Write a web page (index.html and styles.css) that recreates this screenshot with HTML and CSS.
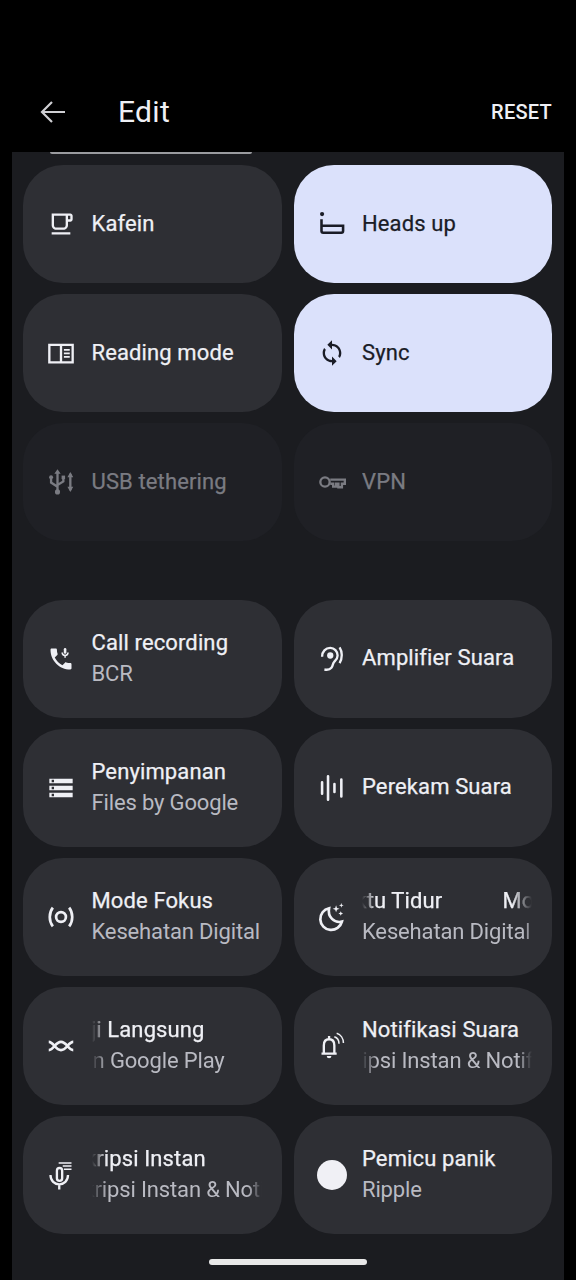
FILE: index.html
```html
<!DOCTYPE html>
<html lang="id">
<head>
    <meta charset="UTF-8">
    <title>Edit</title>
    <link rel="stylesheet" href="styles.css">
</head>
<body>

<header class="topbar">
    <svg class="back" viewBox="0 0 26 24"><path d="M25 12H2M12 2 2 12l10 10"/></svg>
    <h1>Edit</h1>
    <span class="reset">RESET</span>
</header>

<main class="panel">
    <div class="tile-edge"></div>

    <div class="grid">
        <div class="tile">
            <svg class="icon" viewBox="0 0 24 24"><path class="solid" d="M4 19h16v2H4zM20 3H4v10c0 2.21 1.79 4 4 4h6c2.21 0 4-1.79 4-4v-3h2c1.11 0 2-.9 2-2V5c0-1.11-.89-2-2-2zm-4 10c0 1.1-.9 2-2 2H8c-1.1 0-2-.9-2-2V5h10v8zm4-5h-2V5h2v3z"/></svg>
            <div class="text"><div class="title">Kafein</div></div>
        </div>
        <div class="tile on">
            <svg class="icon" viewBox="0 0 24 24"><circle class="solid" cx="3.500" cy="3.500" r="1.800"/><path class="round" d="M3 8v10c0 1 .5 1.500 1.500 1.500h15.500c1 0 1.500-.5 1.500-1.500v-4.500H3"/></svg>
            <div class="text"><div class="title">Heads up</div></div>
        </div>
        <div class="tile">
            <svg class="icon" viewBox="0 0 24 24"><path class="solid" d="M1 4h22v17H1zm2 2v13h8V6zm10 0v13h8V6zm1.500 2.500h5V10h-5zm0 3h5V13h-5zm0 3h5V16h-5z" fill-rule="evenodd"/></svg>
            <div class="text"><div class="title">Reading mode</div></div>
        </div>
        <div class="tile on">
            <svg class="icon" viewBox="0 0 24 24"><path class="solid" d="M12 4V1L8 5l4 4V6c3.310 0 6 2.690 6 6 0 1.010-.25 1.970-.7 2.800l1.460 1.460C19.540 15.030 20 13.570 20 12c0-4.420-3.580-8-8-8zm0 14c-3.310 0-6-2.690-6-6 0-1.010.25-1.970.7-2.800L5.240 7.740C4.460 8.970 4 10.430 4 12c0 4.420 3.580 8 8 8v3l4-4-4-4v3z"/></svg>
            <div class="text"><div class="title">Sync</div></div>
        </div>
        <div class="tile off">
            <svg class="icon" viewBox="0 0 24 24"><path d="M9 4v17M3.500 9v3.500l5.500 3.500M14 8v3.500L9 14.500M20 5v14"/><path class="solid" d="M9 1l-2.700 4h5.400zM20 3.500 17.500 8h5zM20 20.500 17.500 16h5z"/><circle class="solid" cx="3.500" cy="8" r="1.700"/><circle class="solid" cx="9" cy="20.500" r="2.200"/><path class="solid" d="M12.500 6.500h3v3h-3z"/></svg>
            <div class="text"><div class="title">USB tethering</div></div>
        </div>
        <div class="tile off">
            <svg class="icon" viewBox="0 0 24 24"><circle cx="6" cy="12" r="4"/><path d="M10.500 10h12.500v3.500h-2.500v3h-3v-3h-2v2.500h-2.500v-2.500h-2.500"/></svg>
            <div class="text"><div class="title">VPN</div></div>
        </div>
    </div>

    <div class="grid second">
        <div class="tile">
            <svg class="icon" viewBox="0 0 24 24"><path class="solid" d="M6.620 10.790c1.440 2.830 3.760 5.140 6.590 6.590l2.200-2.200c.27-.27.67-.36 1.020-.24 1.120.37 2.330.57 3.570.57.55 0 1 .45 1 1V20c0 .55-.45 1-1 1C10.610 21 3 13.390 3 4c0-.55.45-1 1-1h3.500c.55 0 1 .45 1 1 0 1.250.2 2.450.57 3.570.11.35.03.74-.25 1.020l-2.200 2.200z"/><path class="thin" d="M13 6.500a2.500 2.500 0 0 0 5 0M15.500 9v2"/><rect class="solid" x="14.400" y="2.500" width="2.200" height="5" rx="1.100"/></svg>
            <div class="text"><div class="title">Call recording</div><div class="sub">BCR</div></div>
        </div>
        <div class="tile">
            <svg class="icon" viewBox="0 0 24 24"><path d="M3.500 10C3.500 5.500 6.500 2.500 10.500 2.500c3.500 0 6.300 2.800 6.300 6.500 0 3-1.800 4.200-3 5.500-1.300 1.400-1 3.500-2.300 5-1.200 1.500-3.400 2-6 1.500"/><circle class="solid" cx="10.500" cy="9" r="2.700"/><path d="M18.500 2c2.500 3.800 2.500 9.500 0 13.500"/></svg>
            <div class="text"><div class="title">Amplifier Suara</div></div>
        </div>
        <div class="tile">
            <svg class="icon" viewBox="0 0 24 24"><path class="solid" d="M2 20h20v-4H2v4zm2-3h2v2H4v-2zM2 4v4h20V4H2zm4 3H4V5h2v2zm-4 7h20v-4H2v4zm2-3h2v2H4v-2z"/></svg>
            <div class="text"><div class="title">Penyimpanan</div><div class="sub">Files by Google</div></div>
        </div>
        <div class="tile">
            <svg class="icon" viewBox="0 0 24 24"><path class="bars" d="M3.500 7v10M8.600 2v20M14.100 8.500v7M20 4.800v14.400"/></svg>
            <div class="text"><div class="title">Perekam Suara</div></div>
        </div>
        <div class="tile">
            <svg class="icon" viewBox="0 0 24 24"><circle class="heavy" cx="12" cy="12" r="4.200"/><path class="heavy" d="M5 4C1.500 8.500 1.500 15.500 5 20M19 4c3.500 4.500 3.500 11.500 0 16"/></svg>
            <div class="text"><div class="title">Mode Fokus</div><div class="sub">Kesehatan Digital</div></div>
        </div>
        <div class="tile">
            <svg class="icon" viewBox="0 0 24 24"><path class="heavy" d="M9.500 4.500a9.400 9.400 0 1 0 11 11.500c-6.500 1.500-12.500-4-11-11.500z"/><path class="solid" d="M15.500 2l.8 2.200 2.200.8-2.200.8-.8 2.200-.8-2.200L12.500 5l2.200-.8zM20 0l.5 1.500L22 2l-1.500.5L20 4l-.5-1.500L18 2l1.500-.5zM19.500 7l.6 1.400 1.400.6-1.400.6-.6 1.400-.6-1.400-1.400-.6 1.400-.6z"/></svg>
            <div class="text"><div class="title scroll-fade"><div class="scroll tidur"><span>Waktu Tidur</span><span>Mode Waktu Tidur</span></div></div><div class="sub fade-end">Kesehatan Digital</div></div>
        </div>
        <div class="tile">
            <svg class="icon" viewBox="0 0 24 24"><path class="heavy" d="M1.500 8.500c2 0 3.500 1.700 5 3.500s3.500 3.500 5.500 3.500 4-1.700 5.500-3.500 3-3.500 5-3.500M1.500 15.500c2 0 3.500-1.700 5-3.500s3.500-3.500 5.500-3.500 4 1.700 5.500 3.500 3 3.500 5 3.500"/></svg>
            <div class="text"><div class="title fade"><div class="scroll uji"><span>Uji Langsung</span><span>Uji Langsung</span></div></div><div class="sub fade"><div class="scroll layanan"><span>Layanan Google Play</span></div></div></div>
        </div>
        <div class="tile">
            <svg class="icon" viewBox="0 0 24 24"><path d="M3 18.500h13M5 18v-6.500c0-3.300 1.800-5.300 4.500-5.300s4.500 2 4.500 5.300V18M9.500 3.500v3"/><path class="solid" d="M7.500 20.500h4a2 2 0 0 1-4 0z"/><path class="thin" d="M14 4c2.500.8 4 3 4 6M16 1c3.500 1 5.800 4.500 5.800 8.500"/></svg>
            <div class="text"><div class="title">Notifikasi Suara</div><div class="sub fade"><div class="scroll notif"><span>Transkripsi Instan &amp; Notifikasi Suara</span></div></div></div>
        </div>
        <div class="tile">
            <svg class="icon mic" viewBox="0 0 24 24"><rect x="8.500" y="6" width="4.500" height="11" rx="2.250"/><path d="M3 12c0 5 3.500 8 7.500 8s7.500-3 7.500-8M10.500 20v4.500"/><path class="thin" d="M10 1.700h11M13.500 4.300H21M14.500 7H21"/></svg>
            <div class="text"><div class="title fade"><div class="scroll trans"><span>Transkripsi Instan</span></div></div><div class="sub fade"><div class="scroll trans"><span>Transkripsi Instan &amp; Notifikasi Suara</span></div></div></div>
        </div>
        <div class="tile">
            <div class="dot"></div>
            <div class="text"><div class="title">Pemicu panik</div><div class="sub">Ripple</div></div>
        </div>
    </div>
</main>

<div class="nav-pill"></div>

</body>
</html>
```

FILE: styles.css
```css
html, body {
    margin: 0;
    height: 1280px;
    overflow: hidden;
    background-color: #000;
}
body {
    position: relative;
    font-family: Roboto, "Noto Sans", sans-serif;
    color: #eff0f5;
}
.topbar {
    height: 152px;
    box-sizing: border-box;
    padding: 97px 24px 0 40px;
    display: flex;
    align-items: flex-start;
}
.back {
    width: 26px;
    height: 24px;
    margin-top: 3px;
    fill: none;
    stroke: #cfcfd3;
    stroke-width: 2.2;
}
.topbar h1 {
    margin: 0 0 0 52px;
    font-size: 30px;
    line-height: 30px;
    font-weight: 400;
    letter-spacing: .3px;
}
.reset {
    margin-left: auto;
    font-size: 20px;
    line-height: 30px;
    font-weight: 500;
    letter-spacing: .25px;
}
.panel {
    margin: 0 12px;
    height: 1128px;
    padding: 0 12px 0 11px;
    background-color: #1b1c20;
}
.tile-edge {
    width: 202px;
    height: 2px;
    margin-left: 27px;
    margin-bottom: 11px;
    background-color: #9a9b9f;
    border-radius: 0 0 8px 8px;
}
.grid {
    display: grid;
    grid-template-columns: 1fr 1fr;
    grid-auto-rows: 118px;
    gap: 11px 12px;
}
.second {
    margin-top: 58.5px;
}
.tile {
    display: flex;
    align-items: center;
    gap: 16.5px;
    min-width: 0;
    padding: 0 20px 0 24px;
    border-radius: 40px;
    background-color: #2e2f34;
}
.tile.on {
    background-color: #dbe1fb;
    color: #1a1c26;
}
.tile.off {
    background-color: #1f2025;
    color: #7a7b82;
}
.icon {
    flex: none;
    width: 28px;
    height: 28px;
    fill: none;
    stroke: currentColor;
    stroke-width: 2;
    overflow: visible;
}
.icon .solid {
    fill: currentColor;
    stroke: none;
}
.icon .thin {
    stroke-width: 1.3;
}
.icon .heavy {
    stroke-width: 2.3;
}
.icon .round {
    stroke-width: 2.2;
}
.icon .bars {
    stroke-width: 2.2;
    stroke-linecap: round;
}
.dot {
    flex: none;
    width: 30px;
    height: 30px;
    margin: 0 -1px;
    border-radius: 50%;
    background-color: #f0f0f5;
}
.text {
    flex: 1;
    min-width: 0;
    overflow: hidden;
}
.title, .sub {
    font-size: 22px;
    line-height: 30.5px;
    white-space: nowrap;
    overflow: hidden;
}
.title {
    letter-spacing: .12px;
    -webkit-text-stroke: .25px currentColor;
}
.sub {
    color: #b9bac2;
    letter-spacing: -.15px;
}
.fade {
    -webkit-mask-image: linear-gradient(to right, transparent 0, #000 15px, #000 calc(100% - 14px), transparent 100%);
    mask-image: linear-gradient(to right, transparent 0, #000 15px, #000 calc(100% - 14px), transparent 100%);
}
.fade-end {
    -webkit-mask-image: linear-gradient(to right, #000 calc(100% - 6px), transparent 100%);
    mask-image: linear-gradient(to right, #000 calc(100% - 6px), transparent 100%);
}
.scroll-fade {
    -webkit-mask-image: linear-gradient(to right, transparent 0, #000 14px, #000 calc(100% - 20px), transparent 100%);
    mask-image: linear-gradient(to right, transparent 0, #000 14px, #000 calc(100% - 20px), transparent 100%);
}
.scroll {
    display: flex;
    gap: 60px;
}
.tidur { margin-left: -38px; }
.uji { margin-left: -15px; }
.layanan { margin-left: -68px; }
.notif { margin-left: -72px; }
.trans { margin-left: -62px; }
.nav-pill {
    position: absolute;
    left: 209px;
    top: 1259px;
    width: 158px;
    height: 6px;
    border-radius: 3px;
    background-color: #e8e8e8;
}
```
